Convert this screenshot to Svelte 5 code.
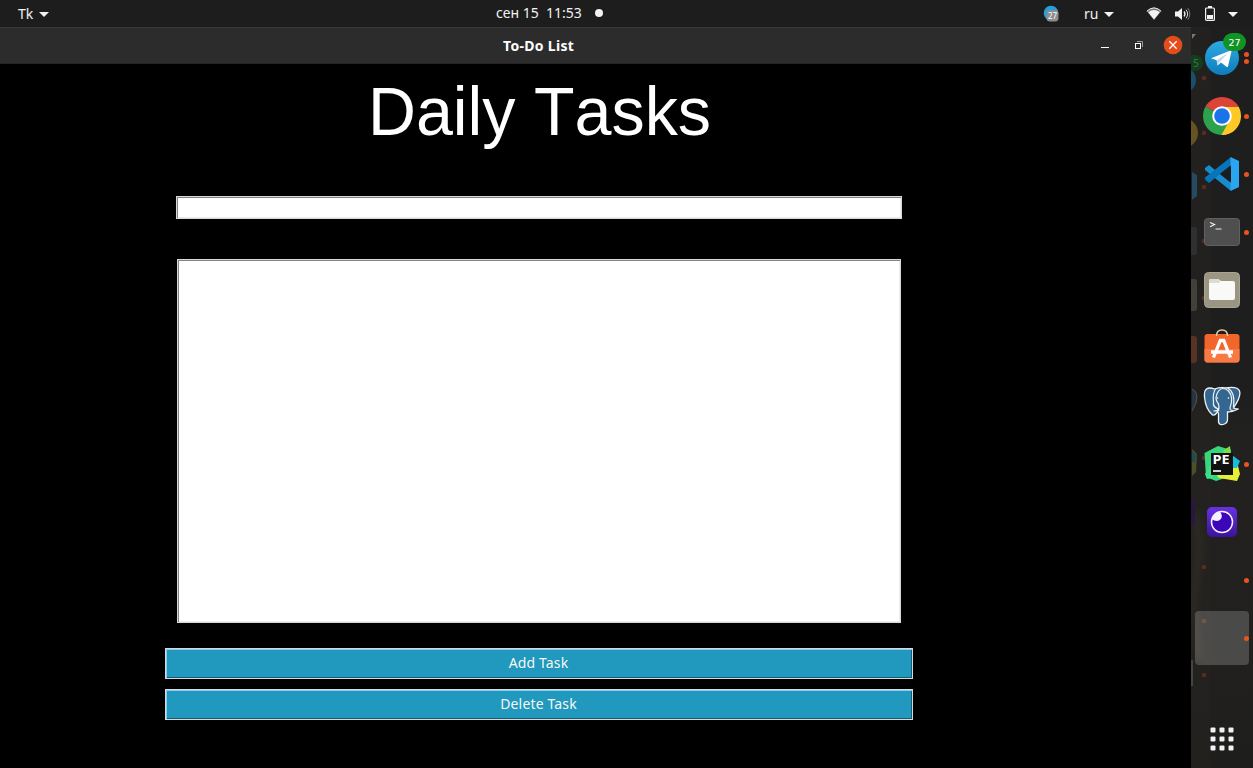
<script>
  const pins = [
    { id: 'telegram', dots: 2 },
    { id: 'chrome', dots: 1 },
    { id: 'code', dots: 1 },
    { id: 'terminal', dots: 1 },
    { id: 'files', dots: 0 },
    { id: 'software', dots: 0 },
    { id: 'postgres', dots: 0 },
    { id: 'pycharm', dots: 1 },
    { id: 'insomnia', dots: 0 },
    { id: 'blank', dots: 1 },
    { id: 'active', dots: 1 }
  ];
  const grid = [0, 9, 18];
</script>

{#snippet caret()}
  <svg class="caret" width="10" height="5" viewBox="0 0 10 5"><path d="M0 0h10L5 5z" fill="#f2f2f2" /></svg>
{/snippet}

<div class="screen">
  <header class="topbar">
    <div class="left"><span>Tk</span>{@render caret()}</div>
    <div class="clock"><span>сен 15&nbsp; 11:53</span><i></i></div>
    <div class="status">
      <svg class="tray" width="18" height="18" viewBox="0 0 18 18">
        <circle cx="8" cy="8" r="7.3" fill="#279fda" />
        <rect x="3.5" y="5" width="12" height="11.5" rx="3.5" fill="#8b8d8f" />
        <text x="9.5" y="14" font-size="8" text-anchor="middle" fill="#fff">27</text>
      </svg>
      <span class="lang">ru</span>{@render caret()}
      <svg class="wifi" width="16" height="14" viewBox="0 0 16 14">
        <path d="M.8 4.2Q8-2.5 15.2 4.2L8 13z" fill="#777" />
        <path d="M.8 4.2Q8-2.5 15.2 4.2" fill="none" stroke="#f2f2f2" stroke-width="1" />
        <path d="M2.2 5.2Q8 .8 13.8 5.2L8 12.5z" fill="#f2f2f2" />
      </svg>
      <svg class="vol" width="16" height="14" viewBox="0 0 16 14">
        <path d="M0 4.5h3L7 1v12L3 9.500H0z" fill="#f2f2f2" />
        <path d="M9 4.500q2 2.500 0 5" fill="none" stroke="#f2f2f2" stroke-width="1.300" />
        <path d="M11 2.700q3.300 4.300 0 8.600" fill="none" stroke="#ddd" stroke-width="1" />
        <path d="M12.800 1.200q4 5.800 0 11.600" fill="none" stroke="#777" stroke-width="1" />
      </svg>
      <svg class="bat" width="10" height="15" viewBox="0 0 10 15">
        <path d="M3 0h4v2H3z" fill="#f2f2f2" />
        <rect x=".6" y="2" width="8.800" height="12.400" rx="1" fill="none" stroke="#f2f2f2" stroke-width="1.200" />
        <path d="M2 9h6v4H2z" fill="#f2f2f2" />
      </svg>
      {@render caret()}
    </div>
  </header>

  <div class="desk">
    <main class="window">
      <div class="titlebar">
        <span></span>
        <b>To-Do List</b>
        <div class="controls">
          <svg width="92" height="36" viewBox="0 0 92 36">
            <path d="M10 19.500h8" stroke="#fff" />
            <rect x="44.500" y="15.500" width="5" height="5" fill="none" stroke="#fff" />
            <path d="M46 13.500h5.500V19" fill="none" stroke="#999" />
            <circle cx="82" cy="17" r="9.300" fill="#e24d1b" />
            <path d="M78.300 13.300l7.400 7.400m0-7.400l-7.400 7.400" stroke="#fff" stroke-width="1.300" />
          </svg>
        </div>
      </div>
      <div class="content">
        <h1><span>Daily Tasks</span></h1>
        <div class="entry sunken"></div>
        <div class="list sunken"></div>
        <button>Add Task</button>
        <button>Delete Task</button>
      </div>
    </main>

    <aside class="dock">
      <svg class="backdrop" width="62" height="741" viewBox="0 0 62 741">
        <defs>
          <linearGradient id="wall" x1="0" y1="0" x2="0" y2="1">
            <stop offset="0" stop-color="#1e1e1e" /><stop offset=".48" stop-color="#1e1e1e" />
            <stop offset=".56" stop-color="#222120" /><stop offset=".85" stop-color="#21201f" />
            <stop offset="1" stop-color="#1e1e1d" />
          </linearGradient>
          <filter id="soft" x="-100%" y="-20%" width="300%" height="140%"><feGaussianBlur stdDeviation="3" /></filter>
        </defs>
        <rect width="62" height="741" fill="url(#wall)" />
        <rect width="19" height="741" fill="#25231f" opacity=".5" />
        <path d="M3 485q9 30 2 65t4 80" fill="none" stroke="#40382c" stroke-width="9" opacity=".3" filter="url(#soft)" />
        <path d="M1 7h4L1 12z" fill="#777" />
        <circle cx="-8" cy="53" r="13" fill="#17506a" />
        <rect x="-10" y="28" width="22" height="16" rx="8" fill="#123f1b" />
        <text x="2" y="40" font-size="10" fill="#42704a">5</text>
        <circle cx="-8" cy="106" r="15" fill="#665420" />
        <path d="M1 145l5 3v21l-5 4z" fill="#244b60" />
        <rect x="-8" y="200" width="14" height="28" rx="3" fill="#303030" />
        <rect x="-8" y="252" width="14" height="32" rx="3" fill="#41413a" />
        <rect x="-8" y="309" width="14" height="27" rx="3" fill="#573323" />
        <path d="M1 362q7 3 4 14l-4 8" fill="#263441" stroke="#555" stroke-width="1" />
        <path d="M1 422l5 5-1 18-4 4z" fill="#4a5223" />
        <path d="M1 424l4 4-1 7H1z" fill="#1d4b53" />
        <rect x="-8" y="472" width="12" height="26" rx="3" fill="#28183f" />
        <rect x="0" y="633" width="2" height="26" fill="#464640" />
        {#each [51, 106, 160, 214, 271, 431, 540, 594, 648] as y}
          <circle cx="13" cy={y} r="2.300" fill="#592c20" />
        {/each}
      </svg>

      {#each pins as pin}
        <div class="cell" class:active={pin.id === 'active'}>
          <svg width="40" height="42" viewBox="0 0 40 42">
            {#if pin.id === 'telegram'}
              <defs><linearGradient id="tg" x2="0" y2="1"><stop stop-color="#2faae2" /><stop offset="1" stop-color="#0c7dbd" /></linearGradient></defs>
              <circle cx="20" cy="21" r="17" fill="url(#tg)" />
              <path d="M9 21.300L28.500 13.500q1.200-.3.900 1.300L26 29.500q-.4 1-1.500.3L19 25.500l-3.500 3-.8-5.200z" fill="#fff" />
              <path d="M14.700 23.300L26 16l-8 8.500-2.500 4z" fill="#b9d8e9" />
            {:else if pin.id === 'chrome'}
              <path d="M20 21L3.550 11.500A19 19 0 0 1 36.450 11.500z" fill="#dc4437" />
              <path d="M20 21L3.550 11.500A19 19 0 0 0 20 40z" fill="#2da24c" />
              <path d="M20 21L36.450 11.500A19 19 0 0 1 20 40z" fill="#fec927" />
              <path d="M20 12h16.700L27.800 25.500z" fill="#fec927" /><path d="M27.800 25.500L19.500 40 12.200 25.500z" fill="#2da24c" />
              <path d="M27 27L19.500 40a19 19 0 0 0 13-5z" fill="#fec927" />
              <circle cx="20" cy="21" r="9.800" fill="#fff" /><circle cx="20" cy="21" r="7.800" fill="#1a73e8" />
            {:else if pin.id === 'code'}
              <path d="M3 15L7 12l22 18v8L3 17z" fill="#168bd0" />
              <path d="M3 26.500L7 30l22-18V4L3 24.500z" fill="#0875b9" />
              <path d="M28.500 4l8.500 4v26l-8.500 4z" fill="#2aa5ef" />
              <path d="M29 13v16L18 21z" fill="#1c1d1e" />
            {:else if pin.id === 'terminal'}
              <rect x="2.500" y="7.500" width="35" height="27" rx="3" fill="#4f4f4f" stroke="#606060" />
              <path d="M8 11.500l4.500 2-4.500 2.200M13.500 18h6" fill="none" stroke="#f0f0f0" stroke-width="1.200" />
            {:else if pin.id === 'files'}
              <rect x="2.500" y="3.500" width="35" height="35" rx="4" fill="#9b9684" stroke="#aaa593" />
              <path d="M7 12q0-2 2-2h7l3 2h12q2 0 2 2v15q0 2-2 2H9q-2 0-2-2z" fill="#f9f9f7" />
              <path d="M7 14v-2q0-2 2-2h7l3 2-2 2z" fill="#dedbd0" />
            {:else if pin.id === 'software'}
              <rect x="2.500" y="7" width="35" height="28.500" rx="3" fill="#f2652b" />
              <path d="M2.500 22h35v10.500q0 3-3 3h-29q-3 0-3-3z" fill="#f77a45" />
              <path d="M14.500 9q0-6 5.500-6t5.500 6" fill="none" stroke="#e3cfa6" stroke-width="1.500" />
              <path d="M11.500 30.500L18.300 13.500h3.400l6.800 17M9 25h22" fill="none" stroke="#fff" stroke-width="3.300" />
            {:else if pin.id === 'postgres'}
              <g transform="translate(0.5 -1)">
                <path d="M12 5Q1 1 2 13t8 18q3 1 5-4l1 3v8q1 4 6 2 3-1 3-5v-7q5 0 11-3-3 0-5-1 8-12 6-17T23 4q-5-1-11 1z" fill="#336791" stroke="#f1f1f1" stroke-width="1.300" />
                <path d="M13 5q-3 4-2 13-1 5 5 7-1 2-5 2M16 27q1-4 0-7-5-6 0-13 4-5 10 0 5 6 2 15-2 4 3 5M25 4q8 4 6 19" fill="none" stroke="#f1f1f1" stroke-width="1.200" />
                <circle cx="15" cy="14" r=".8" fill="#fff" /><circle cx="26" cy="14" r=".8" fill="#fff" />
              </g>
            {:else if pin.id === 'pycharm'}
              <path d="M2.500 10L16 3l13 4-3 27-12 4-10-4z" fill="#36d77b" />
              <path d="M31 18l4 1 3 12-3 7-18-3-3-4z" fill="#e5ef38" />
              <path d="M22 7l6-4 1 8h-8z" fill="#7ddd48" /><path d="M30 12l8 6-3 7h-5z" fill="#18bddd" />
              <path d="M3 31l8-13v17l-6 1z" fill="#3adf86" />
              <rect x="9" y="10" width="22" height="22" fill="#111" />
              <text x="10.500" y="21" class="pe" font-size="12" font-weight="700" textLength="17" lengthAdjust="spacingAndGlyphs" fill="#fff">PE</text>
              <path d="M11 28h8" stroke="#fff" stroke-width="1.600" />
            {:else if pin.id === 'insomnia'}
              <defs><linearGradient id="ins" x2="0" y2="1"><stop stop-color="#6930e6" /><stop offset="1" stop-color="#3c1497" /></linearGradient></defs>
              <rect x="5" y="6" width="30" height="30" rx="5" fill="url(#ins)" />
              <circle cx="20" cy="21" r="10.500" fill="#3c05b8" stroke="#f5f3ff" stroke-width="1.500" />
              <path d="M10 18a11 11 0 0 1 7-7.500c4 2 4 9-2 9.500-2 0-4-1-5-2z" fill="#f3f1ff" />
            {/if}
          </svg>
          {#if pin.id === 'telegram'}<em>27</em>{/if}
          <div class="dots">{#each Array(pin.dots) as _}<i></i>{/each}</div>
        </div>
      {/each}

      <svg class="apps" width="24" height="24" viewBox="0 0 24 24">
        {#each grid as y}{#each grid as x}<rect x={x + 0.5} y={y + 0.500} width="5" height="5" rx="1" fill="#f2f2f2" />{/each}{/each}
      </svg>
    </aside>
  </div>
</div>

<style>
  :global(body) { margin: 0; background: #000; }
  .screen { width: 1253px; height: 768px; overflow: hidden; display: flex; flex-direction: column; font-family: "Noto Sans", sans-serif; font-size: 14px; color: #f2f2f2; }
  .topbar { height: 27px; box-sizing: border-box; background: #1d1d1d; display: grid; grid-template-columns: 496px 1fr 209px; align-items: center; line-height: 26px; }
  .left { display: flex; align-items: center; padding-left: 18px; gap: 6px; }
  .clock { display: flex; align-items: center; gap: 13px; padding-bottom: 2px; }
  .clock i { width: 8px; height: 8px; border-radius: 50%; background: #f2f2f2; }
  .status { display: flex; align-items: center; }
  .tray { margin-right: 23px; margin-left: -1px; }
  .lang { width: 20px; }
  .wifi { margin-left: 32px; }
  .vol { margin-left: 13px; margin-bottom: 1px; }
  .bat { margin: 0 13px 2px 14px; }
  .desk { display: flex; height: 741px; }
  .window { width: 1191px; background: #000; }
  .titlebar { height: 37px; box-sizing: border-box; border-top: 1px solid #393939; border-bottom: 1px solid #252525; background: #2c2c2c; display: grid; grid-template-columns: 503px 1fr 92px; padding-right: 8px; line-height: 35px; }
  .titlebar b { color: #fff; letter-spacing: .3px; }
  .controls svg { display: block; }
  .content { width: 1078px; display: flex; flex-direction: column; align-items: center; }
  h1 { margin: 8px 0 44px; height: 80px; font: 400 66.4px/80px "Liberation Sans", Arial, sans-serif; font-kerning: none; color: #fff; padding-left: 1px; }
  h1 span { display: block; transform: scaleY(1.04); transform-origin: 0 61px; }
  .sunken { box-sizing: border-box; background: #fff; border: 1px solid #d9d9d9; box-shadow: inset 1px 1px #828282, inset -1px -1px #ececec; }
  .entry { width: 726px; height: 23px; }
  .list { width: 724px; height: 364px; margin: 40px 0 25px; }
  button { width: 748px; height: 31px; margin: 0 0 10px; padding: 0 1px 2px 0; border: 1px solid #d9d9d9; border-radius: 0; background: #2198bd; box-shadow: inset 1px 1px #83cef4, inset -1px -1px #125c74; color: #f7f7f7; font: 14px/27px "Noto Sans", sans-serif; letter-spacing: .15px; }
  .dock { width: 62px; position: relative; display: flex; flex-direction: column; padding-top: 2px; box-sizing: border-box; overflow: hidden; }
  .backdrop { position: absolute; inset: 0; }
  .cell { position: relative; height: 58px; flex: none; display: flex; align-items: center; justify-content: center; }
  .active::before { content: ""; position: absolute; left: 4px; top: 2px; width: 54px; height: 54px; border-radius: 4px; background: rgba(255, 255, 255, .19); }
  .cell em { position: absolute; left: 32px; top: 4px; width: 23px; height: 18px; border-radius: 9px; background: #119326; color: #fff; font: 9.5px/19px "DejaVu Sans", sans-serif; text-align: center; }
  .dots { position: absolute; right: 4px; top: 0; height: 58px; display: flex; flex-direction: column; justify-content: center; gap: 2px; }
  .dots i { width: 5px; height: 5px; border-radius: 50%; background: #e95420; }
  .apps { position: relative; margin: 60px 0 0 19px; }
  .pe { font-family: "Open Sans", sans-serif; }
</style>
